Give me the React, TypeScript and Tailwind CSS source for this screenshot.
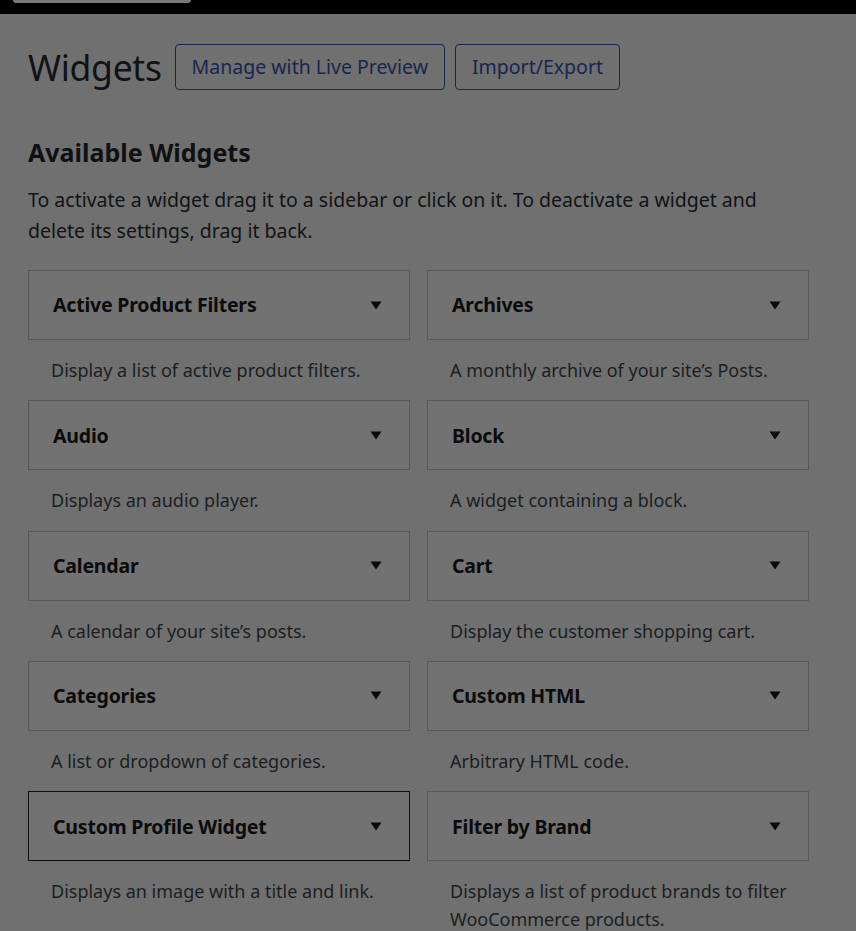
import React from "react";

interface Widget {
  name: string;
  desc: string;
  focused?: boolean;
}

const widgets: Widget[] = [
  { name: "Active Product Filters", desc: "Display a list of active product filters." },
  { name: "Archives", desc: "A monthly archive of your site’s Posts." },
  { name: "Audio", desc: "Displays an audio player." },
  { name: "Block", desc: "A widget containing a block." },
  { name: "Calendar", desc: "A calendar of your site’s posts." },
  { name: "Cart", desc: "Display the customer shopping cart." },
  { name: "Categories", desc: "A list or dropdown of categories." },
  { name: "Custom HTML", desc: "Arbitrary HTML code." },
  { name: "Custom Profile Widget", desc: "Displays an image with a title and link.", focused: true },
  { name: "Filter by Brand", desc: "Displays a list of product brands to filter WooCommerce products." },
];

function Caret() {
  return (
    <svg width="12" height="9" viewBox="0 0 12 9" className="shrink-0">
      <path d="M0.5 0.5 L11.5 0.5 L6 8.5 Z" fill="#0a0a0a" />
    </svg>
  );
}

function WidgetItem({ w }: { w: Widget }) {
  return (
    <div>
      <div
        className={`h-[70px] flex items-center justify-between pl-[24px] pr-[27px] bg-[#727272] border ${
          w.focused ? "border-[#101010]" : "border-[#585858]"
        }`}
      >
        <span className="text-[19.5px] font-bold text-[#0b0b0b] tracking-[-0.2px]">{w.name}</span>
        <Caret />
      </div>
      <p className="pt-[16px] pb-[16.3px] pl-[23px] pr-[20px] text-[18px] leading-[28px] text-[#1b1e21]">
        {w.desc}
      </p>
    </div>
  );
}

export default function App() {
  return (
    <div
      className="min-h-[931px] bg-[#707070] overflow-hidden"
      style={{ fontFamily: '"Noto Sans", "Open Sans", sans-serif' }}
    >
      {/* dimmed admin bar */}
      <div className="h-[14px] bg-black flex items-start">
        <div className="ml-[13px] w-[178px] h-[3px] bg-[#777777] rounded-b-[3px]" />
      </div>

      <div className="pl-[28px] pr-[48px]">
        <div className="flex items-center pt-[30px]">
          <h1 className="mr-[13px] text-[35.5px] leading-[40px] text-[#101214] tracking-[-0.3px]">Widgets</h1>
          <div className="flex gap-[10px]">
            <button className="h-[46px] px-[16px] border-[1.5px] border-[#18264e] rounded-[4px] text-[19.5px] text-[#18264e]">
              Manage with Live Preview
            </button>
            <button className="h-[46px] px-[16px] border-[1.5px] border-[#18264e] rounded-[4px] text-[19.5px] text-[#18264e]">
              Import/Export
            </button>
          </div>
        </div>

        <h2 className="mt-[46px] text-[25px] leading-[32px] font-bold text-[#0e1012]">Available Widgets</h2>
        <p className="mt-[16px] text-[19.5px] leading-[31px] text-[#111315] max-w-[780px]">
          To activate a widget drag it to a sidebar or click on it. To deactivate a widget and delete its
          settings, drag it back.
        </p>

        <div className="mt-[24px] grid grid-cols-2 gap-x-[17px] w-[781px]">
          {widgets.map((w) => (
            <WidgetItem key={w.name} w={w} />
          ))}
        </div>
      </div>
    </div>
  );
}
